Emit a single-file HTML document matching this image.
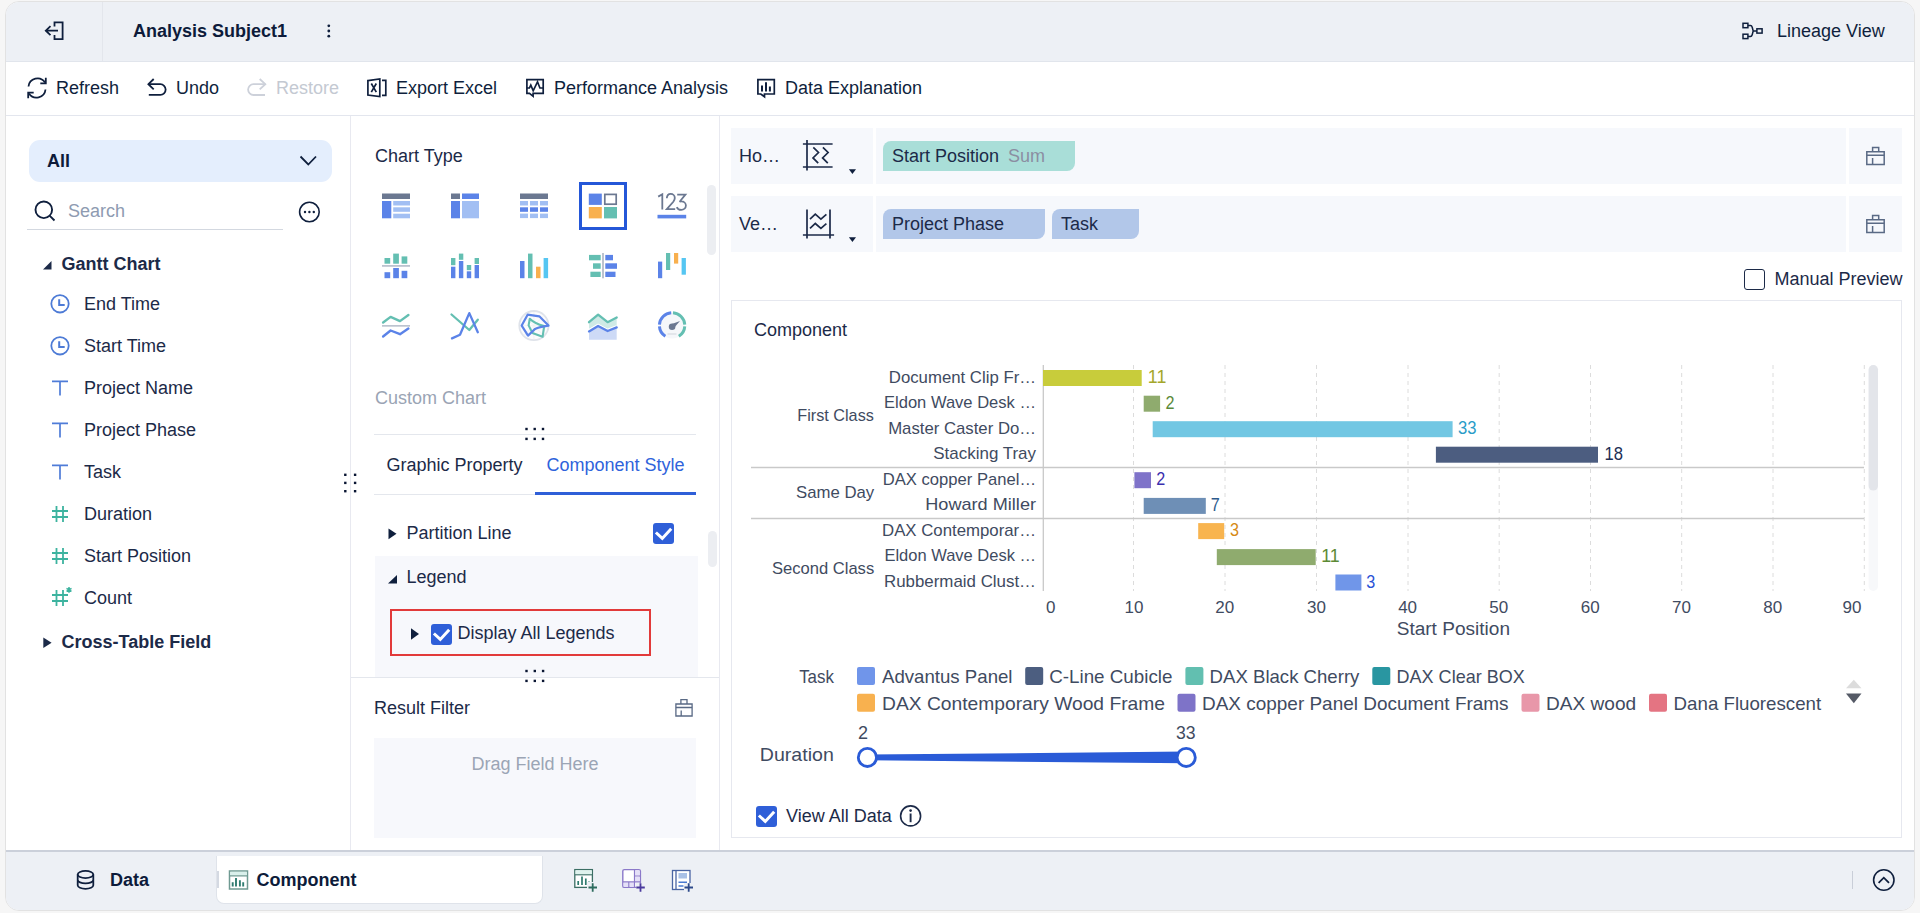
<!DOCTYPE html>
<html><head><meta charset="utf-8">
<style>
*{margin:0;padding:0;box-sizing:border-box}
html,body{width:1920px;height:913px;overflow:hidden;background:#f6f6f6;font-family:"Liberation Sans",sans-serif;color:#1c2a48}
#frame{position:absolute;left:5px;top:1px;width:1910px;height:910px;border:1px solid #e2e2e2;border-radius:14px;background:#fff;overflow:hidden}
#c{position:absolute;left:-6px;top:-2px;width:1920px;height:913px}
.a{position:absolute}
.t{position:absolute;font-size:18px;line-height:22px;white-space:nowrap}
.b{font-weight:bold;color:#0d1b3a}
svg{position:absolute;overflow:visible}
</style></head><body>
<div id="frame"><div id="c">
<!-- header -->
<div class="a" style="left:0;top:0;width:1920px;height:62px;background:#edf0f5;border-bottom:1px solid #e1e5ec"></div>
<div class="a" style="left:102px;top:0;width:1px;height:61px;background:#e3e6ec"></div>
<svg style="left:0;top:0" width="1" height="1">
  <g fill="none" stroke="#0f1f3d" stroke-width="1.8">
    <path d="M54.5 26.5V22.3H62.6V39.2H54.5V35"/>
    <path d="M58 30.7H45.8M50.5 26.2L45.8 30.7L50.5 35.2"/>
  </g>
</svg>
<div class="t b" style="left:133px;top:20px">Analysis Subject1</div>
<svg style="left:0;top:0" width="1" height="1"><g fill="#0f1f3d"><circle cx="328.8" cy="25.8" r="1.4"/><circle cx="328.8" cy="31" r="1.4"/><circle cx="328.8" cy="36.2" r="1.4"/></g></svg>
<svg style="left:0;top:0" width="1" height="1">
  <g fill="none" stroke="#0f1f3d" stroke-width="1.5">
    <rect x="1743" y="23.3" width="4.9" height="4.4"/>
    <rect x="1743" y="34.2" width="4.9" height="4.4"/>
    <rect x="1756.9" y="28.8" width="5.2" height="4.3"/>
    <path d="M1748 25.5H1750.5Q1751.7 25.5 1752.2 27.2L1753.2 31H1756.9M1748 36.4H1750.5Q1751.7 36.4 1752.2 34.7L1753.2 31"/>
  </g>
</svg>
<div class="t" style="left:1777px;top:20px;color:#0f1f3d">Lineage View</div>

<!-- toolbar -->
<div class="a" style="left:0;top:115px;width:1920px;height:1px;background:#e3e6ee"></div>
<svg style="left:0;top:0" width="1" height="1">
  <g fill="none" stroke="#0f1f3d" stroke-width="1.8">
    <path d="M28.5 86.5A9 9 0 0 1 45 82.5"/><path d="M45.8 77.8V83.3H40.3"/>
    <path d="M45.5 89.5A9 9 0 0 1 29 93.5"/><path d="M28.2 98.2V92.7H33.7"/>
  </g>
  <g fill="none" stroke="#0f1f3d" stroke-width="1.8">
    <path d="M153.7 79L148.4 84.2L153.7 89.3"/><path d="M148.8 84.2H160.3A5.35 5.35 0 0 1 160.3 94.9H148.8"/>
  </g>
  <g fill="none" stroke="#cdd1da" stroke-width="1.8">
    <path d="M259.7 79L265.3 84.2L259.7 89.3"/><path d="M265.3 84.2H253.5A5.4 5.4 0 0 0 253.5 95H265"/>
  </g>
  <g fill="none" stroke="#0f1f3d" stroke-width="1.7">
    <path d="M367.9 80.6L379.8 79V96.6L367.9 95Z"/><path d="M371.3 83.5L376.3 92.1M376.3 83.5L371.3 92.1"/><path d="M382 80.3H385.8V95.3H382"/>
  </g>
  <g fill="none" stroke="#0f1f3d" stroke-width="1.7">
    <path d="M526.9 79.6H543.2V93.4H533.1V96.3L529.5 93.4H526.9Z"/><path d="M526.9 88H529.4L530.8 85.1L533.2 90.8L537.5 81.8L539.9 88H543.2"/>
  </g>
  <g fill="none" stroke="#0f1f3d" stroke-width="1.7">
    <path d="M757.9 79.6H774.3V94H764.5V96.8L760.8 94H757.9Z"/><path d="M762 85.4V91.5M766 82.3V91.5M769.9 86.5V91.5" stroke-width="2"/>
  </g>
</svg>
<div class="t" style="left:56px;top:77px;color:#0f1f3d">Refresh</div>
<div class="t" style="left:176px;top:77px;color:#0f1f3d">Undo</div>
<div class="t" style="left:276px;top:77px;color:#c4c9d2">Restore</div>
<div class="t" style="left:396px;top:77px;color:#0f1f3d">Export Excel</div>
<div class="t" style="left:554px;top:77px;color:#0f1f3d">Performance Analysis</div>
<div class="t" style="left:785px;top:77px;color:#0f1f3d">Data Explanation</div>

<!-- panel borders -->
<div class="a" style="left:350px;top:116px;width:1px;height:734px;background:#e8e9f0"></div>
<div class="a" style="left:719px;top:116px;width:1px;height:734px;background:#e8e9f0"></div>

<!-- LEFT PANEL -->

<div class="a" style="left:29px;top:140px;width:303px;height:42px;background:#e4eefd;border-radius:11px"></div>
<div class="t b" style="left:47px;top:150px">All</div>
<svg style="left:0;top:0" width="1" height="1"><path d="M300.5 156.5L308.3 164.5L316 156.5" fill="none" stroke="#0f1f3d" stroke-width="1.8"/></svg>
<svg style="left:0;top:0" width="1" height="1"><g fill="none" stroke="#0f1f3d" stroke-width="1.9"><circle cx="43.8" cy="209.8" r="8.3"/><path d="M49.8 215.8L54.5 220.5"/></g></svg>
<div class="t" style="left:68px;top:200px;color:#8e9bb1">Search</div>
<div class="a" style="left:27px;top:229px;width:256px;height:1px;background:#d3d8e0"></div>
<svg style="left:0;top:0" width="1" height="1"><g fill="none" stroke="#0f1f3d" stroke-width="1.6"><circle cx="309.4" cy="212" r="9.8"/></g><g fill="#0f1f3d"><circle cx="305" cy="212" r="1.2"/><circle cx="309.4" cy="212" r="1.2"/><circle cx="313.8" cy="212" r="1.2"/></g></svg>

<svg style="left:0;top:0" width="1" height="1"><path d="M43 269.5L51.5 261V269.5Z" fill="#1c2a48"/></svg>
<div class="t b" style="left:61.5px;top:253px;color:#1c2a48">Gantt Chart</div>
<svg style="left:0;top:0" width="1" height="1">
 <g fill="none" stroke="#4d7bd6" stroke-width="1.8">
  <circle cx="60" cy="303.8" r="8.7"/><path d="M59.2 299.2V305.1H64.7" stroke-width="2"/>
  <circle cx="60" cy="345.8" r="8.7"/><path d="M59.2 341.2V347.1H64.7" stroke-width="2"/>
 </g>
 <g fill="none" stroke="#4f7cd8" stroke-width="1.7">
  <path d="M52 381.3H68M60 381.3V395.5"/>
  <path d="M52 423.3H68M60 423.3V437.5"/>
  <path d="M52 465.3H68M60 465.3V479.5"/>
 </g>
 <g fill="none" stroke="#3db39f" stroke-width="1.8">
  <path d="M52 511H68M52 517H68M56.5 506V522M63 506V522"/>
  <path d="M52 553H68M52 559H68M56.5 548V564M63 548V564"/>
  <path d="M52 595H68M52 601H68M56.5 590V606M63 590V606"/>
 </g>
 <g stroke="#3db39f" stroke-width="1.5" fill="none"><path d="M69 587V592.8M66.5 588.4L71.5 591.4M71.5 588.4L66.5 591.4"/></g>
 <path d="M43.3 637.5L51.6 642.7L43.3 647.9Z" fill="#1c2a48"/>
 <g fill="#0a1633"><rect x="344.1" y="473.6" width="2.4" height="2.4"/><rect x="353.9" y="473.6" width="2.4" height="2.4"/><rect x="344.1" y="481.7" width="2.4" height="2.4"/><rect x="353.9" y="481.7" width="2.4" height="2.4"/><rect x="344.1" y="490.0" width="2.4" height="2.4"/><rect x="353.9" y="490.0" width="2.4" height="2.4"/></g>
</svg>
<div class="t" style="left:84px;top:293px">End Time</div>
<div class="t" style="left:84px;top:335px">Start Time</div>
<div class="t" style="left:84px;top:377px">Project Name</div>
<div class="t" style="left:84px;top:419px">Project Phase</div>
<div class="t" style="left:84px;top:461px">Task</div>
<div class="t" style="left:84px;top:503px">Duration</div>
<div class="t" style="left:84px;top:545px">Start Position</div>
<div class="t" style="left:84px;top:587px">Count</div>
<div class="t b" style="left:61.5px;top:631px;color:#1c2a48">Cross-Table Field</div>


<!-- MIDDLE PANEL -->
<div class="t" style="left:375px;top:145px">Chart Type</div>
<svg style="left:0;top:0" width="1" height="1"><rect x="382" y="193.5" width="28" height="5.5" fill="#6b7891"/><rect x="382" y="201" width="9.3" height="17.3" fill="#5b83e8"/><rect x="393.2" y="201" width="16.8" height="4.5" fill="#a2bff3"/><rect x="393.2" y="207.3" width="16.8" height="4.5" fill="#a2bff3"/><rect x="393.2" y="213.7" width="16.8" height="4.6" fill="#a2bff3"/><rect x="451" y="193.5" width="9" height="5.5" fill="#6b7891"/><rect x="462" y="193.5" width="17" height="5.5" fill="#5b83e8"/><rect x="451" y="201" width="9" height="17.3" fill="#5b83e8"/><rect x="462" y="201" width="17" height="17.3" fill="#a2bff3"/><rect x="520" y="193.5" width="28" height="5.5" fill="#6b7891"/><rect x="520" y="201.0" width="8" height="4.5" fill="#a2bff3"/><rect x="530" y="201.0" width="8" height="4.5" fill="#a2bff3"/><rect x="540" y="201.0" width="8" height="4.5" fill="#a2bff3"/><rect x="520" y="207.3" width="8" height="4.5" fill="#5b83e8"/><rect x="530" y="207.3" width="8" height="4.5" fill="#5b83e8"/><rect x="540" y="207.3" width="8" height="4.5" fill="#5b83e8"/><rect x="520" y="213.6" width="8" height="4.5" fill="#a2bff3"/><rect x="530" y="213.6" width="8" height="4.5" fill="#a2bff3"/><rect x="540" y="213.6" width="8" height="4.5" fill="#a2bff3"/><rect x="588.8" y="193.6" width="13" height="11.3" fill="#5b83e8"/><rect x="604.8" y="194.4" width="11.4" height="9.8" fill="none" stroke="#6b7891" stroke-width="1.7"/><rect x="588.8" y="207" width="13" height="11.4" fill="#f8b04e"/><rect x="604" y="207" width="13" height="11.4" fill="#64bfb2"/><g fill="none" stroke="#6b7891" stroke-width="1.8"><path d="M658.2 196.6L662.3 194.2V209.6"/><path d="M666.8 198.3C667 195.3 668.8 193.9 670.7 193.9C673 193.9 674.8 195.6 674.8 198C674.8 199.5 674.2 200.5 673.3 201.8L666.8 209.1H675.2"/><path d="M677.2 194.6H685.4L679.6 201.7C680.1 201.5 680.7 201.4 681.3 201.4C683.9 201.4 685.9 203.3 685.9 205.6C685.9 208 683.8 209.9 681.2 209.9C679.2 209.9 677.5 208.8 676.8 207.1"/></g><rect x="657.5" y="214.8" width="28.7" height="3.6" fill="#5b83e8"/><rect x="384.5" y="258" width="5.7" height="5.7" fill="#64bfb2"/><rect x="393.2" y="253.6" width="5.7" height="10.1" fill="#64bfb2"/><rect x="401.6" y="256.4" width="5.7" height="7.3" fill="#64bfb2"/><rect x="382" y="265" width="28" height="1.8" fill="#bcc3cf"/><rect x="384.5" y="272.2" width="5.7" height="6" fill="#5b83e8"/><rect x="393.2" y="268" width="5.7" height="10.2" fill="#5b83e8"/><rect x="401.6" y="270.8" width="5.7" height="7.4" fill="#5b83e8"/><rect x="451" y="258" width="4.4" height="7.2" fill="#64bfb2"/><rect x="451" y="266.7" width="4.4" height="11.5" fill="#5b83e8"/><rect x="458.9" y="253.6" width="4.4" height="6.2" fill="#64bfb2"/><rect x="458.9" y="261" width="4.4" height="17.2" fill="#5b83e8"/><rect x="466.8" y="265" width="4.4" height="5.2" fill="#64bfb2"/><rect x="466.8" y="271.3" width="4.4" height="6.9" fill="#5b83e8"/><rect x="474.6" y="258" width="4.4" height="6" fill="#64bfb2"/><rect x="474.6" y="265" width="4.4" height="13.2" fill="#5b83e8"/><rect x="520" y="261" width="4.5" height="17.2" fill="#5b83e8"/><rect x="528" y="253.6" width="4.5" height="24.6" fill="#64bfb2"/><rect x="536" y="266.7" width="4.5" height="11.5" fill="#f8b04e"/><rect x="543.6" y="258" width="4.5" height="20.2" fill="#55c6f2"/><rect x="602" y="253" width="2" height="25.3" fill="#bcc3cf"/><rect x="589" y="254.9" width="11.7" height="5.4" fill="#64bfb2"/><rect x="593" y="263.3" width="7.7" height="5.5" fill="#64bfb2"/><rect x="590.4" y="271.7" width="10.3" height="5.3" fill="#64bfb2"/><rect x="605.3" y="254.9" width="7.7" height="5.4" fill="#5b83e8"/><rect x="605.3" y="263.3" width="11.7" height="5.5" fill="#5b83e8"/><rect x="605.3" y="271.7" width="10.2" height="5.3" fill="#5b83e8"/><rect x="658" y="261.6" width="4.2" height="16.6" fill="#5b83e8"/><rect x="666" y="253" width="4.2" height="17" fill="#64bfb2"/><rect x="674" y="253" width="4.2" height="10.6" fill="#f8b04e"/><rect x="681.6" y="258" width="4.3" height="16.7" fill="#55c6f2"/><polyline points="383.1,322.5 390.6,316.9 400,321.1 408.4,315" fill="none" stroke="#64bfb2" stroke-width="2.4" stroke-linecap="round" stroke-linejoin="round"/><rect x="382" y="325" width="28" height="1.7" fill="#bcc3cf"/><polyline points="383.1,336.5 390.6,330.5 400,334.2 408.4,328.6" fill="none" stroke="#5b83e8" stroke-width="2.4" stroke-linecap="round" stroke-linejoin="round"/><polyline points="451.5,314.5 469.3,330 477.8,319.7" fill="none" stroke="#64bfb2" stroke-width="2.3" stroke-linecap="round" stroke-linejoin="round"/><polyline points="452,338.4 460,334.7 469.3,313.1 477.8,332.3" fill="none" stroke="#5b83e8" stroke-width="2.3" stroke-linecap="round" stroke-linejoin="round"/><circle cx="533.9" cy="325.6" r="14.6" fill="#fcfcfd" stroke="#dfe3ea" stroke-width="1.8"/><path d="M520 325.6H548M533.9 312V339M524 315.7L543.8 335.5M543.8 315.7L524 335.5" stroke="#eef0f3" stroke-width="0.8"/><path d="M529.8 318.7Q534.5 323.5 544.2 326L542.6 336.8L532.4 332.9L528.6 325.4Z" fill="none" stroke="#64bfb2" stroke-width="2.1" stroke-linejoin="round"/><path d="M527.6 314.7L539.3 316.3L548.5 325.6Q539 327 535.1 328.9L528 335.6L521.7 325.6Z" fill="none" stroke="#5b83e8" stroke-width="2.2" stroke-linejoin="round"/><polygon points="589,322.2 598.1,314.6 607.6,322.2 616.7,317.5 616.7,326 607.6,329.5 598.1,324 589,329" fill="#cfeae6"/><polyline points="589,322.2 598.1,314.6 607.6,322.2 616.7,317.5" fill="none" stroke="#64bfb2" stroke-width="2.3" stroke-linecap="round" stroke-linejoin="round"/><polygon points="589,331.4 598.1,325.9 607.6,331 616.7,327.4 616.7,339.8 589,339.8" fill="#cddaf6"/><polyline points="589,330.4 598.1,324.9 607.6,330 616.7,326.4" fill="none" stroke="#fff" stroke-width="2.5"/><polyline points="589,331.4 598.1,325.9 607.6,331 616.7,327.4" fill="none" stroke="#5b83e8" stroke-width="2.3" stroke-linecap="round" stroke-linejoin="round"/><circle cx="672.1" cy="325.5" r="13" fill="#f5f7fa"/><path d="M671.21 312.83A12.7 12.7 0 0 0 659.43 324.61 M659.43 326.39A12.7 12.7 0 0 0 665.37 336.27" fill="none" stroke="#5b83e8" stroke-width="3"/><path d="M684.77 324.61A12.7 12.7 0 0 0 672.99 312.83 M678.83 336.27A12.7 12.7 0 0 0 684.77 326.39" fill="none" stroke="#64bfb2" stroke-width="3"/><circle cx="672.1" cy="326.7" r="3.3" fill="#6b7891"/><path d="M670.5 324.5L680 321L673.5 328.5Z" fill="#6b7891"/><rect x="667.5" y="333.2" width="9" height="1.6" fill="#dfe2e8"/></svg>
<div class="a" style="left:579px;top:182px;width:48px;height:48px;border:3px solid #2457d8"></div>
<div class="a" style="left:707px;top:185px;width:9px;height:70px;background:#eceef2;border-radius:5px"></div>
<div class="t" style="left:375px;top:387px;color:#9aa4b4">Custom Chart</div>
<div class="a" style="left:374px;top:434px;width:322px;height:1px;background:#e4e7ed"></div>
<svg style="left:0;top:0" width="1" height="1"><g fill="#0a1633"><rect x="525.3" y="427.8" width="2.4" height="2.4"/><rect x="533.5" y="427.8" width="2.4" height="2.4"/><rect x="541.8" y="427.8" width="2.4" height="2.4"/><rect x="525.3" y="437.7" width="2.4" height="2.4"/><rect x="533.5" y="437.7" width="2.4" height="2.4"/><rect x="541.8" y="437.7" width="2.4" height="2.4"/></g></svg>
<div class="t" style="left:386.5px;top:454px">Graphic Property</div>
<div class="t" style="left:546.5px;top:454px;color:#2f63db">Component Style</div>
<div class="a" style="left:374px;top:494px;width:322px;height:1px;background:#e4e7ed"></div>
<div class="a" style="left:535px;top:492px;width:161px;height:3px;background:#2f5fd8"></div>
<svg style="left:0;top:0" width="1" height="1"><path d="M388.5 528.5L396.5 533.8L388.5 539.2Z" fill="#0f1f3d"/></svg>
<div class="t" style="left:406.5px;top:522px">Partition Line</div>
<div class="a" style="left:653px;top:523px;width:21px;height:21px;background:#2f5fd8;border-radius:3px"></div>
<svg style="left:0;top:0" width="1" height="1"><path d="M655.9 532.5L662.3 538.4L671.2 528.8" fill="none" stroke="#fff" stroke-width="3"/></svg>
<div class="a" style="left:707.5px;top:531px;width:9px;height:36px;background:#eceef2;border-radius:5px"></div>
<div class="a" style="left:374.5px;top:556px;width:323px;height:121px;background:#f7f8fc"></div>
<svg style="left:0;top:0" width="1" height="1"><path d="M388 583.5L397 575V583.5Z" fill="#0f1f3d"/></svg>
<div class="t" style="left:406.5px;top:566px">Legend</div>
<div class="a" style="left:390px;top:609px;width:261px;height:47px;border:2px solid #e23a3a"></div>
<svg style="left:0;top:0" width="1" height="1"><path d="M411 628.3L419 634L411 639.7Z" fill="#0f1f3d"/></svg>
<div class="a" style="left:431px;top:624px;width:21px;height:21px;background:#2f5fd8;border-radius:3px"></div>
<svg style="left:0;top:0" width="1" height="1"><path d="M433.9 633.5L440.3 639.4L449.2 629.8" fill="none" stroke="#fff" stroke-width="3"/></svg>
<div class="t" style="left:457.5px;top:622px">Display All Legends</div>
<div class="a" style="left:351px;top:677px;width:368px;height:1px;background:#e4e7ed"></div>
<svg style="left:0;top:0" width="1" height="1"><g fill="#0a1633"><rect x="525.3" y="669.8" width="2.4" height="2.4"/><rect x="533.6" y="669.8" width="2.4" height="2.4"/><rect x="541.9" y="669.8" width="2.4" height="2.4"/><rect x="525.3" y="679.7" width="2.4" height="2.4"/><rect x="533.6" y="679.7" width="2.4" height="2.4"/><rect x="541.9" y="679.7" width="2.4" height="2.4"/></g></svg>
<div class="t" style="left:374px;top:697px">Result Filter</div>
<svg style="left:0;top:0" width="1" height="1"><g fill="none" stroke="#5a6a85" stroke-width="1.3"><path d="M675.9 704H692.1V716H675.9Z"/><path d="M680.9 704V699.7H687V704"/><path d="M675.9 707.5H692.1M681.2 710.5V716"/></g></svg>
<div class="a" style="left:374px;top:738px;width:322px;height:100px;background:#f7f8fc"></div>
<div class="t" style="left:374px;top:753px;width:322px;text-align:center;color:#9ba5b5">Drag Field Here</div>


<!-- RIGHT PANEL -->

<div class="a" style="left:731px;top:128px;width:142px;height:56px;background:#f6f8fc"></div>
<div class="a" style="left:876px;top:128px;width:970px;height:56px;background:#f6f8fc"></div>
<div class="a" style="left:1849px;top:128px;width:53px;height:56px;background:#f6f8fc"></div>
<div class="a" style="left:731px;top:196px;width:142px;height:56px;background:#f6f8fc"></div>
<div class="a" style="left:876px;top:196px;width:970px;height:56px;background:#f6f8fc"></div>
<div class="a" style="left:1849px;top:196px;width:53px;height:56px;background:#f6f8fc"></div>
<div class="t" style="left:739px;top:145px">Ho…</div>
<div class="t" style="left:739px;top:213px">Ve…</div>
<svg style="left:0;top:0" width="1" height="1">
 <g fill="none" stroke="#1c2a48" stroke-width="1.7">
  <path d="M807 140V170.5M802.9 144H832.6M802.9 167H832.6"/>
  <path d="M813.3 147.3L818.5 152.5L813 157.9L818.2 163.1M822.9 147.3L828.1 152.5L822.6 157.9L827.8 163.1"/>
  <path d="M807 209.5V238.5M830 209.5V238.5M802.9 235H834.1"/>
  <path d="M810 219.1L815.3 214.2L820.9 219.1L826.4 214.3M810 228.4L815.3 223.5L820.9 228.4L826.4 223.6"/>
 </g>
 <path d="M848.9 169.2H856L852.4 173.9Z" fill="#0f1f3d"/>
 <path d="M848.9 237.2H856L852.4 241.9Z" fill="#0f1f3d"/>
 <g fill="none" stroke="#5a6a85" stroke-width="1.5" transform="translate(0 0)"><path d="M1866.8 151.8H1884.2V164.4H1866.8Z"/><path d="M1872.6 151.8V147.4H1878.7V151.8"/><path d="M1866.8 155.2H1884.2M1872.6 158V164.4"/></g>
 <g fill="none" stroke="#5a6a85" stroke-width="1.5" transform="translate(0 68)"><path d="M1866.8 151.8H1884.2V164.4H1866.8Z"/><path d="M1872.6 151.8V147.4H1878.7V151.8"/><path d="M1866.8 155.2H1884.2M1872.6 158V164.4"/></g>
</svg>
<div class="a" style="left:883px;top:141px;width:192px;height:30px;background:#a9ded8;border-radius:8px 0 8px 0"></div>
<div class="t" style="left:892px;top:145px">Start Position</div>
<div class="t" style="left:1008px;top:145px;color:#8b8ea2">Sum</div>
<div class="a" style="left:883px;top:209px;width:162px;height:30px;background:#b2c7e9;border-radius:8px 0 8px 0"></div>
<div class="t" style="left:892px;top:213px">Project Phase</div>
<div class="a" style="left:1052px;top:209px;width:87px;height:30px;background:#b2c7e9;border-radius:8px 0 8px 0"></div>
<div class="t" style="left:1061px;top:213px">Task</div>
<div class="a" style="left:1744px;top:269px;width:21px;height:21px;border:1.5px solid #1c2a48;border-radius:3px"></div>
<div class="t" style="left:1774.5px;top:268px">Manual Preview</div>
<div class="a" style="left:731px;top:300px;width:1171px;height:538px;border:1px solid #e6e8ef"></div>
<div class="t" style="left:754px;top:319px">Component</div>
<svg style="left:0;top:0" width="1" height="1" font-family="Liberation Sans">
<path d="M1133.5 365V591" stroke="#dcdcdc" stroke-width="1" stroke-dasharray="4 4"/>
<path d="M1225 365V591" stroke="#dcdcdc" stroke-width="1" stroke-dasharray="4 4"/>
<path d="M1316.5 365V591" stroke="#dcdcdc" stroke-width="1" stroke-dasharray="4 4"/>
<path d="M1408 365V591" stroke="#dcdcdc" stroke-width="1" stroke-dasharray="4 4"/>
<path d="M1499.2 365V591" stroke="#dcdcdc" stroke-width="1" stroke-dasharray="4 4"/>
<path d="M1590.5 365V591" stroke="#dcdcdc" stroke-width="1" stroke-dasharray="4 4"/>
<path d="M1681.7 365V591" stroke="#dcdcdc" stroke-width="1" stroke-dasharray="4 4"/>
<path d="M1773 365V591" stroke="#dcdcdc" stroke-width="1" stroke-dasharray="4 4"/>
<path d="M1864.3 365V591" stroke="#dcdcdc" stroke-width="1" stroke-dasharray="4 4"/>
<path d="M751 467.5H1864M751 518.5H1864" stroke="#c9c9c9" stroke-width="1.3"/>
<path d="M1043.3 365V591" stroke="#c9c9c9" stroke-width="1.3"/>
<rect x="1043" y="370" width="98.7" height="16" fill="#c8cc3b"/>
<text x="1147.8" y="383" font-size="18" fill="#a4a72a" textLength="18.5" lengthAdjust="spacingAndGlyphs">11</text>
<rect x="1143.7" y="395.7" width="16.4" height="16" fill="#8fab6e"/>
<text x="1165.6" y="408.7" font-size="18" fill="#5a8a3a" textLength="9" lengthAdjust="spacingAndGlyphs">2</text>
<rect x="1152.7" y="421.2" width="299.9" height="16" fill="#72c7e3"/>
<text x="1458.1" y="434.2" font-size="18" fill="#2a9cc8" textLength="18.5" lengthAdjust="spacingAndGlyphs">33</text>
<rect x="1435.9" y="446.7" width="162.1" height="16" fill="#4c5d80"/>
<text x="1604.4" y="459.7" font-size="18" fill="#1e2f55" textLength="18.5" lengthAdjust="spacingAndGlyphs">18</text>
<rect x="1134.4" y="472.2" width="16.6" height="16" fill="#7f73c9"/>
<text x="1156.3" y="485.2" font-size="18" fill="#3b2fae" textLength="9" lengthAdjust="spacingAndGlyphs">2</text>
<rect x="1143.7" y="497.9" width="62.1" height="16" fill="#6e8fb6"/>
<text x="1210.8" y="510.9" font-size="18" fill="#2d5a8c" textLength="9" lengthAdjust="spacingAndGlyphs">7</text>
<rect x="1198.2" y="523.1" width="26.0" height="16" fill="#f8b44f"/>
<text x="1230" y="536.1" font-size="18" fill="#d68914" textLength="9" lengthAdjust="spacingAndGlyphs">3</text>
<rect x="1216.8" y="549.1" width="98.9" height="16" fill="#8fab6e"/>
<text x="1321.2" y="562.1" font-size="18" fill="#5c8a35" textLength="18.5" lengthAdjust="spacingAndGlyphs">11</text>
<rect x="1335.4" y="574.5" width="26.0" height="16" fill="#7096e9"/>
<text x="1366.3" y="587.5" font-size="18" fill="#2a52d6" textLength="9" lengthAdjust="spacingAndGlyphs">3</text>
<text x="888.8" y="382.8" font-size="17" fill="#3f4b61" textLength="147.2" lengthAdjust="spacingAndGlyphs">Document Clip Fr…</text>
<text x="884" y="408.3" font-size="17" fill="#3f4b61" textLength="152.0" lengthAdjust="spacingAndGlyphs">Eldon Wave Desk …</text>
<text x="888.2" y="433.8" font-size="17" fill="#3f4b61" textLength="147.8" lengthAdjust="spacingAndGlyphs">Master Caster Do…</text>
<text x="933.3" y="459.3" font-size="17" fill="#3f4b61" textLength="102.7" lengthAdjust="spacingAndGlyphs">Stacking Tray</text>
<text x="882.8" y="484.5" font-size="17" fill="#3f4b61" textLength="153.2" lengthAdjust="spacingAndGlyphs">DAX copper Panel…</text>
<text x="925.3" y="510" font-size="17" fill="#3f4b61" textLength="110.7" lengthAdjust="spacingAndGlyphs">Howard Miller</text>
<text x="882" y="535.8" font-size="17" fill="#3f4b61" textLength="154.0" lengthAdjust="spacingAndGlyphs">DAX Contemporar…</text>
<text x="884.4" y="561.2" font-size="17" fill="#3f4b61" textLength="151.6" lengthAdjust="spacingAndGlyphs">Eldon Wave Desk …</text>
<text x="884" y="586.5" font-size="17" fill="#3f4b61" textLength="152.0" lengthAdjust="spacingAndGlyphs">Rubbermaid Clust…</text>
<text x="797.25" y="420.5" font-size="17" fill="#3f4b61" textLength="76.6" lengthAdjust="spacingAndGlyphs">First Class</text>
<text x="796" y="497.5" font-size="17" fill="#3f4b61" textLength="78.2" lengthAdjust="spacingAndGlyphs">Same Day</text>
<text x="771.9" y="573.8" font-size="17" fill="#3f4b61" textLength="102.3" lengthAdjust="spacingAndGlyphs">Second Class</text>
<text x="1050.7" y="613.2" font-size="17" fill="#3f4b61" text-anchor="middle">0</text>
<text x="1133.9" y="613.2" font-size="17" fill="#3f4b61" text-anchor="middle">10</text>
<text x="1224.8" y="613.2" font-size="17" fill="#3f4b61" text-anchor="middle">20</text>
<text x="1316.5" y="613.2" font-size="17" fill="#3f4b61" text-anchor="middle">30</text>
<text x="1407.6" y="613.2" font-size="17" fill="#3f4b61" text-anchor="middle">40</text>
<text x="1498.75" y="613.2" font-size="17" fill="#3f4b61" text-anchor="middle">50</text>
<text x="1590.2" y="613.2" font-size="17" fill="#3f4b61" text-anchor="middle">60</text>
<text x="1681.4" y="613.2" font-size="17" fill="#3f4b61" text-anchor="middle">70</text>
<text x="1772.7" y="613.2" font-size="17" fill="#3f4b61" text-anchor="middle">80</text>
<text x="1852" y="613.2" font-size="17" fill="#3f4b61" text-anchor="middle">90</text>
<text x="1396.7" y="634.5" font-size="18" fill="#3f4b61" textLength="113.3" lengthAdjust="spacingAndGlyphs">Start Position</text>
<rect x="1868.6" y="365" width="9.4" height="226" rx="4.7" fill="#f7f8fa"/><rect x="1868.6" y="365" width="9.4" height="125.6" rx="4.7" fill="#e3e5ea"/>
<text x="799.2" y="683" font-size="19" fill="#3f4b61" textLength="34.7" lengthAdjust="spacingAndGlyphs">Task</text>
<rect x="857" y="667" width="18" height="18" rx="2" fill="#7095ea"/>
<text x="882" y="683" font-size="19" fill="#3f4b61" textLength="130.5" lengthAdjust="spacingAndGlyphs">Advantus Panel</text>
<rect x="1025.2" y="667" width="18" height="18" rx="2" fill="#4c5e80"/>
<text x="1049.2" y="683" font-size="19" fill="#3f4b61" textLength="123.3" lengthAdjust="spacingAndGlyphs">C-Line Cubicle</text>
<rect x="1185.4" y="667" width="18" height="18" rx="2" fill="#62bfb0"/>
<text x="1209.6" y="683" font-size="19" fill="#3f4b61" textLength="149.8" lengthAdjust="spacingAndGlyphs">DAX Black Cherry</text>
<rect x="1372.3" y="667" width="18" height="18" rx="2" fill="#2996a1"/>
<text x="1396.6" y="683" font-size="19" fill="#3f4b61" textLength="128.1" lengthAdjust="spacingAndGlyphs">DAX Clear BOX</text>
<rect x="857" y="693.8" width="18" height="18" rx="2" fill="#f8b14f"/>
<text x="882" y="709.8" font-size="19" fill="#3f4b61" textLength="283.0" lengthAdjust="spacingAndGlyphs">DAX Contemporary Wood Frame</text>
<rect x="1177.5" y="693.8" width="18" height="18" rx="2" fill="#7e73c8"/>
<text x="1202" y="709.8" font-size="19" fill="#3f4b61" textLength="306.6" lengthAdjust="spacingAndGlyphs">DAX copper Panel Document Frams</text>
<rect x="1521.5" y="693.8" width="18" height="18" rx="2" fill="#e897a9"/>
<text x="1546" y="709.8" font-size="19" fill="#3f4b61" textLength="90.1" lengthAdjust="spacingAndGlyphs">DAX wood</text>
<rect x="1649" y="693.8" width="18" height="18" rx="2" fill="#e47482"/>
<text x="1673.6" y="709.8" font-size="19" fill="#3f4b61" textLength="147.6" lengthAdjust="spacingAndGlyphs">Dana Fluorescent</text>
<path d="M1846 688.2L1853.8 679.7L1861.5 688.2Z" fill="#dcdcdc"/><path d="M1846 693.6H1861.5L1853.8 703.3Z" fill="#555a66"/>
<text x="759.8" y="760.6" font-size="19" fill="#3f4b61" textLength="74" lengthAdjust="spacingAndGlyphs">Duration</text>
<text x="858" y="739.3" font-size="18" fill="#3f4b61">2</text><text x="1176" y="739.3" font-size="18" fill="#3f4b61" textLength="19.6" lengthAdjust="spacingAndGlyphs">33</text>
<path d="M867.4 754.6L1186.2 751.5V763.3L867.4 760.2Z" fill="#2a5bd7"/>
<circle cx="867.4" cy="757.4" r="9.1" fill="#fff" stroke="#2a5bd7" stroke-width="2.8"/><circle cx="1186.2" cy="757.4" r="9.1" fill="#fff" stroke="#2a5bd7" stroke-width="2.8"/>
</svg>
<div class="a" style="left:756px;top:806px;width:21px;height:21px;background:#2f5fd8;border-radius:3px"></div>
<svg style="left:0;top:0" width="1" height="1"><path d="M758.9 815.5L765.3 821.4L774.2 811.8" fill="none" stroke="#fff" stroke-width="3"/>
<g fill="none" stroke="#1c2a48" stroke-width="1.6"><circle cx="910.6" cy="815.9" r="10"/><path d="M910.6 813.5V822.2" stroke-width="1.9"/></g><circle cx="910.6" cy="810.6" r="1.3" fill="#1c2a48"/></svg>
<div class="t" style="left:786px;top:805px">View All Data</div>



<!-- bottom bar -->
<div class="a" style="left:0;top:850px;width:1920px;height:2px;background:#cbd0da"></div>
<div class="a" style="left:0;top:852px;width:1920px;height:61px;background:#edf0f5"></div>

<svg style="left:0;top:0" width="1" height="1"><g fill="none" stroke="#0f1f3d" stroke-width="1.8">
 <ellipse cx="85.5" cy="874.5" rx="7.8" ry="3.6"/>
 <path d="M77.7 874.5V885.2A7.8 3.6 0 0 0 93.3 885.2V874.5M77.7 879.8A7.8 3.6 0 0 0 93.3 879.8"/>
</g></svg>
<div class="t b" style="left:110px;top:869px">Data</div>
<div class="a" style="left:216px;top:856px;width:327px;height:48px;background:#fff;border:1px solid #dfe3ea;border-top:none;border-radius:0 0 8px 8px"></div>
<div class="a" style="left:217px;top:871px;width:1.5px;height:17px;background:#d4d9e2"></div>
<svg style="left:0;top:0" width="1" height="1">
 <rect x="229.5" y="871" width="18" height="18" fill="#fff" stroke="#6f9a92" stroke-width="1.5"/>
 <rect x="230.3" y="871.8" width="16.4" height="3.6" fill="#d9f0eb"/>
 <path d="M230 875.8H247" stroke="#6f9a92" stroke-width="1.2"/>
 <path d="M232.7 886.5V882.2M236 886.5V878M239.9 886.5V880.3M243.2 886.5V882.2" stroke="#2f7c70" stroke-width="1.9"/>
</svg>
<div class="t b" style="left:256.5px;top:869px">Component</div>
<svg style="left:0;top:0" width="1" height="1">
 <rect x="574.8" y="869.6" width="17.6" height="17.8" fill="#fff" stroke="#3b6e64" stroke-width="1.3"/>
 <rect x="575.5" y="870.3" width="16.2" height="4.2" fill="#dff3ee"/>
 <path d="M575 874.8H592" stroke="#3b6e64" stroke-width="1.1"/>
 <path d="M578.2 885V881M582 885V876.5M585.8 885V878.5M589 885V881.5" stroke="#2e7a6e" stroke-width="1.7"/>
 <rect x="587" y="882" width="11" height="11" fill="#edf0f5"/>
 <path d="M588.5 887.5H597M592.7 883.3V891.8" stroke="#2d6b5e" stroke-width="1.8"/>
 <rect x="622.8" y="869.6" width="17.6" height="17.8" rx="1.5" fill="#fff" stroke="#8b79c9" stroke-width="1.4"/>
 <rect x="635.3" y="870.5" width="4.5" height="5" fill="#e5e0f8"/><rect x="635.3" y="876.8" width="4.5" height="4.5" fill="#e5e0f8"/>
 <rect x="623.6" y="882.4" width="4.5" height="4.5" fill="#e5e0f8"/><rect x="629.5" y="882.4" width="4.5" height="4.5" fill="#e5e0f8"/>
 <path d="M634.5 870V887M623 881.8H640M634.5 876H640M628.8 881.8V887" stroke="#8b79c9" stroke-width="1.2" fill="none"/>
 <path d="M628.5 870V887" stroke="#8b79c9" stroke-width="0" />
 <rect x="636" y="883" width="11" height="11" fill="#edf0f5"/>
 <path d="M636.3 887.5H644.8M640.5 883.3V891.8" stroke="#4b3a9e" stroke-width="1.8"/>
 <rect x="672.5" y="870.5" width="17.5" height="19" fill="#fff" stroke="#4a65a3" stroke-width="1.3"/>
 <path d="M676 870.5V889.5" stroke="#4a65a3" stroke-width="1.3"/>
 <rect x="678.5" y="873" width="8.5" height="5.5" fill="#a9c1e6"/>
 <path d="M678.5 882.2H687M678.5 886H683.5" stroke="#4a7ad0" stroke-width="1.4"/>
 <rect x="684" y="883" width="11" height="11" fill="#edf0f5"/>
 <path d="M684.5 887.5H693M688.7 883.3V891.8" stroke="#2e4a8a" stroke-width="1.8"/>
</svg>
<div class="a" style="left:1851.5px;top:871px;width:1.5px;height:18px;background:#c9ced8"></div>
<svg style="left:0;top:0" width="1" height="1"><g fill="none" stroke="#0f1f3d" stroke-width="1.6"><circle cx="1883.8" cy="880" r="10.2"/><path d="M1878.6 882.8L1883.8 877.7L1889 882.8" stroke-width="1.8"/></g></svg>

</div></div>
</body></html>
